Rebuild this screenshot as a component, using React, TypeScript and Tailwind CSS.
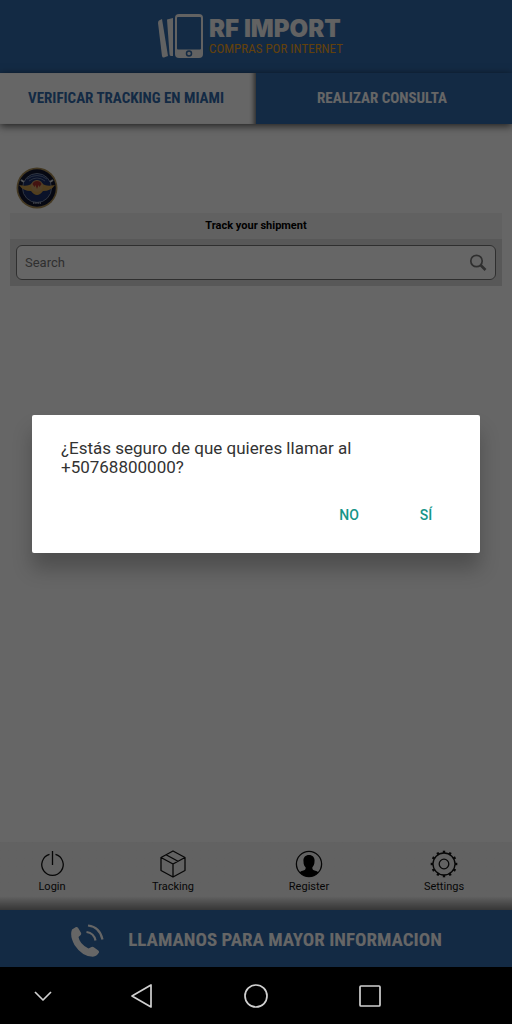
import type { ReactNode } from 'react';

const display = "font-['Roboto_Condensed','Liberation_Sans_Narrow',sans-serif] font-bold";

function BrandIcon() {
  return (
    <svg viewBox="0 0 48 46" className="h-[46px] w-12" aria-hidden="true">
      <path d="M2 6.500 5 5l6 37-4 1.500Q5.500 44 5 42L1 9Q1 7 2 6.500Z" fill="#f4f4f4" />
      <path d="M10 5.500 16 4v38h-2Q12.500 42 12.500 40Z" fill="#f4f4f4" />
      <path d="M17 4v38" stroke="#3069aa" strokeWidth="1" />
      <rect x="18" y="0" width="28" height="44" rx="4" fill="#f4f4f4" />
      <rect x="20" y="3" width="24" height="32.500" rx="1" fill="#3069aa" />
      <circle cx="32" cy="39.500" r="2.500" fill="none" stroke="#3069aa" strokeWidth="1.500" />
    </svg>
  );
}

function Emblem() {
  return (
    <svg viewBox="0 0 42 42" className="h-[42px] w-[42px]" role="img" aria-label="Company seal">
      <circle cx="21" cy="21" r="20.500" fill="#a98d55" />
      <circle cx="21" cy="21" r="18.800" fill="#10142d" />
      <circle cx="21" cy="21" r="14.500" fill="#1b2e66" stroke="#7584a0" strokeWidth="1" />
      <path d="M11 12Q21 5 31 12M13 14Q21 8 29 14" fill="none" stroke="#66779a" strokeWidth="1" />
      <path d="M3 18Q13 20 16 16h10Q29 20 39 18q-4 6-12 6-3 4-6 4t-6-4Q7 24 3 18Z" fill="#c99c4b" />
      <circle cx="21" cy="19" r="6" fill="#c9a064" />
      <path d="M16.500 17q1-3 4.500-3t4.500 3l-2 3-1-2-1.500 4-1.500-4-1 2Z" fill="#a8302b" />
      <path d="M17 36h8" stroke="#a7aec0" strokeWidth="1.500" strokeDasharray="1.500 .7" />
      <path d="M5 13 8 15M37 13l-3 2" stroke="#c4c7cf" strokeWidth="2" />
    </svg>
  );
}

function SearchIcon() {
  return (
    <svg viewBox="0 0 18 18" className="h-[18px] w-[18px]" fill="none" stroke="#777" aria-hidden="true">
      <circle cx="7.500" cy="7" r="5.700" strokeWidth="1.700" />
      <path d="m11.500 11 5 5" strokeWidth="2.600" />
    </svg>
  );
}

function PowerIcon() {
  return (
    <svg viewBox="0 0 28 28" className="h-7 w-7" fill="none" stroke="#111" strokeWidth="1.300" aria-hidden="true">
      <path d="M11.500 4.400a10.700 10.700 0 1 0 6 0M14.500 1v14" />
    </svg>
  );
}

function BoxIcon() {
  return (
    <svg viewBox="0 0 28 28" className="h-7 w-7" fill="none" stroke="#111" strokeWidth="1.300" strokeLinejoin="round" aria-hidden="true">
      <path d="m14 1 12 6.500v13L14 27 2 20.500v-13ZM2 7.500 14 14l12-6.500M14 14v13M7 4.800l12 6.500" />
    </svg>
  );
}

function PersonIcon() {
  return (
    <svg viewBox="0 0 28 28" className="h-7 w-7" aria-hidden="true">
      <circle cx="14" cy="14" r="12.600" fill="none" stroke="#111" strokeWidth="1.300" />
      <path
        d="M14 5c4 0 6 3 5.500 6.500 0 3-1 4.500-2.200 6 0 2 .7 2.700 3 3.300 1.500.4 2.600 1 3.200 1.700A12.600 12.600 0 0 1 4.500 22.500c.6-.7 1.700-1.300 3.200-1.700 2.300-.6 3-1.300 3-3.300-1.500-1.500-2.200-3-2.200-6C8 8 10 5 14 5Z"
        fill="#000"
      />
    </svg>
  );
}

function GearIcon() {
  return (
    <svg viewBox="0 0 28 28" className="h-7 w-7" fill="none" stroke="#111" aria-hidden="true">
      <circle cx="14" cy="14" r="11" strokeWidth="1.300" />
      <circle cx="14" cy="14" r="4.800" strokeWidth="1.300" />
      {Array.from({ length: 12 }).map((_, index) => (
        <path key={index} d="M14 .7v2.300" strokeWidth="2.400" transform={`rotate(${index * 30} 14 14)`} />
      ))}
    </svg>
  );
}

function PhoneIcon() {
  return (
    <svg viewBox="0 0 34 34" className="h-[34px] w-[34px]" aria-hidden="true">
      <path
        d="M2 5.500 6 3q1.200-.4 2 .8l3 5q.6 1.400-.5 2.400L8.500 13q1 7 10 11.500l3-1.500q1.200-.6 2.300.2l4.500 3.300q1.200 1 .5 2.300-1.800 3.500-6 4Q12 32.500 4.500 21-.5 12 2 5.500Z"
        fill="#fff"
      />
      <path d="M18 1.500q12 1.500 14.500 14M16.500 8q7.500 1 9 8.500" fill="none" stroke="#fff" strokeWidth="2.200" />
    </svg>
  );
}

function NavItem({ label, children }: { label: string; children: ReactNode }) {
  return (
    <a href="#" className="flex flex-col items-center">
      {children}
      <span className="text-[11px] leading-[18px] text-[#111]">{label}</span>
    </a>
  );
}

function SystemButton({ label, children }: { label: string; children: ReactNode }) {
  return (
    <button type="button" aria-label={label} className="flex h-full items-center justify-center">
      <svg viewBox="0 0 26 26" className="h-[26px] w-[26px]" fill="none" stroke="#d0d0d0" strokeWidth="1.700" strokeLinejoin="round">
        {children}
      </svg>
    </button>
  );
}

export default function App() {
  return (
    <div className="flex min-h-screen flex-col bg-black font-[Roboto,sans-serif]">
      <div className="relative flex flex-1 flex-col bg-white">
        <header className="flex h-[73px] items-center justify-center bg-[#3069aa] pr-3">
          <div className="flex items-center gap-1">
            <BrandIcon />
            <div className="whitespace-nowrap">
              <div className="font-[Inter,sans-serif] text-[24px] font-black leading-6 text-[#f4f4f4]">RF IMPORT</div>
              <div className="font-['Roboto_Condensed','Liberation_Sans_Narrow',sans-serif] text-[13px] leading-4 text-[#f5a31b]">
                COMPRAS POR INTERNET
              </div>
            </div>
          </div>
        </header>

        <nav className="grid h-[51px] grid-cols-2 shadow-[0_2px_8px_rgba(0,0,0,0.7)]">
          <a
            href="#"
            className={`${display} flex items-center justify-center bg-white pr-1 text-[15px] text-[#3069aa] shadow-[inset_-6px_0_5px_-4px_rgba(0,0,0,0.6)]`}
          >
            VERIFICAR TRACKING EN MIAMI
          </a>
          <a href="#" className={`${display} flex items-center justify-center bg-[#3069aa] pr-1 text-[15px] text-white`}>
            REALIZAR CONSULTA
          </a>
        </nav>

        <main className="flex-1 px-[10px] pt-[43px]">
          <div className="pl-[6px]">
            <Emblem />
          </div>
          <form className="mt-1">
            <label htmlFor="shipment" className="block bg-[#f2f2f2] text-center text-[11px] font-bold leading-[26px] text-black">
              Track your shipment
            </label>
            <div className="bg-[#dcdcdc] p-[6px]">
              <div className="flex h-[35px] items-center rounded-md border border-[#777] bg-white px-2">
                <input
                  id="shipment"
                  type="text"
                  placeholder="Search"
                  className="min-w-0 flex-1 bg-transparent text-[13px] outline-none placeholder:text-[#777]"
                />
                <button type="submit" aria-label="Search">
                  <SearchIcon />
                </button>
              </div>
            </div>
          </form>
        </main>

        <footer>
          <nav className="grid h-[68px] grid-cols-[104fr_138fr_134fr_136fr] bg-linear-to-b from-[#f4f4f4] from-80% to-[#888] pt-2">
            <NavItem label="Login">
              <PowerIcon />
            </NavItem>
            <NavItem label="Tracking">
              <BoxIcon />
            </NavItem>
            <NavItem label="Register">
              <PersonIcon />
            </NavItem>
            <NavItem label="Settings">
              <GearIcon />
            </NavItem>
          </nav>
          <a href="#" className="flex h-[57px] items-center justify-center gap-6 bg-[#3069aa] pt-1">
            <PhoneIcon />
            <span className={`${display} whitespace-nowrap text-[19px] text-white`}>LLAMANOS PARA MAYOR INFORMACION</span>
          </a>
        </footer>

        <div className="absolute inset-0 flex items-center justify-center bg-black/60 px-8">
          <div
            role="alertdialog"
            aria-modal="true"
            aria-labelledby="call-message"
            className="w-full rounded-[2px] bg-white pt-6 pr-[17px] pb-[18px] pl-[29px] shadow-[0_16px_20px_rgba(0,0,0,0.24)]"
          >
            <p id="call-message" className="max-w-[320px] text-[17px] leading-[19px] text-[#333]">
              ¿Estás seguro de que quieres llamar al +50768800000?
            </p>
            <div className="mt-5 flex justify-end text-[14px] font-medium text-[#159588]">
              <button type="button" className="h-[38px] w-20">
                NO
              </button>
              <button type="button" className="h-[38px] w-[74px]">
                SÍ
              </button>
            </div>
          </div>
        </div>
      </div>

      <nav className="grid h-[57px] grid-cols-[85fr_114fr_114fr_114fr_85fr] bg-black" aria-label="System">
        <SystemButton label="Hide navigation">
          <path d="m5 9 8 8 8-8" />
        </SystemButton>
        <SystemButton label="Back">
          <path d="M22 2v22L3 13Z" />
        </SystemButton>
        <SystemButton label="Home">
          <circle cx="13" cy="13" r="11" />
        </SystemButton>
        <SystemButton label="Recent apps">
          <rect x="3" y="3" width="20" height="20" rx="1" />
        </SystemButton>
      </nav>
    </div>
  );
}
